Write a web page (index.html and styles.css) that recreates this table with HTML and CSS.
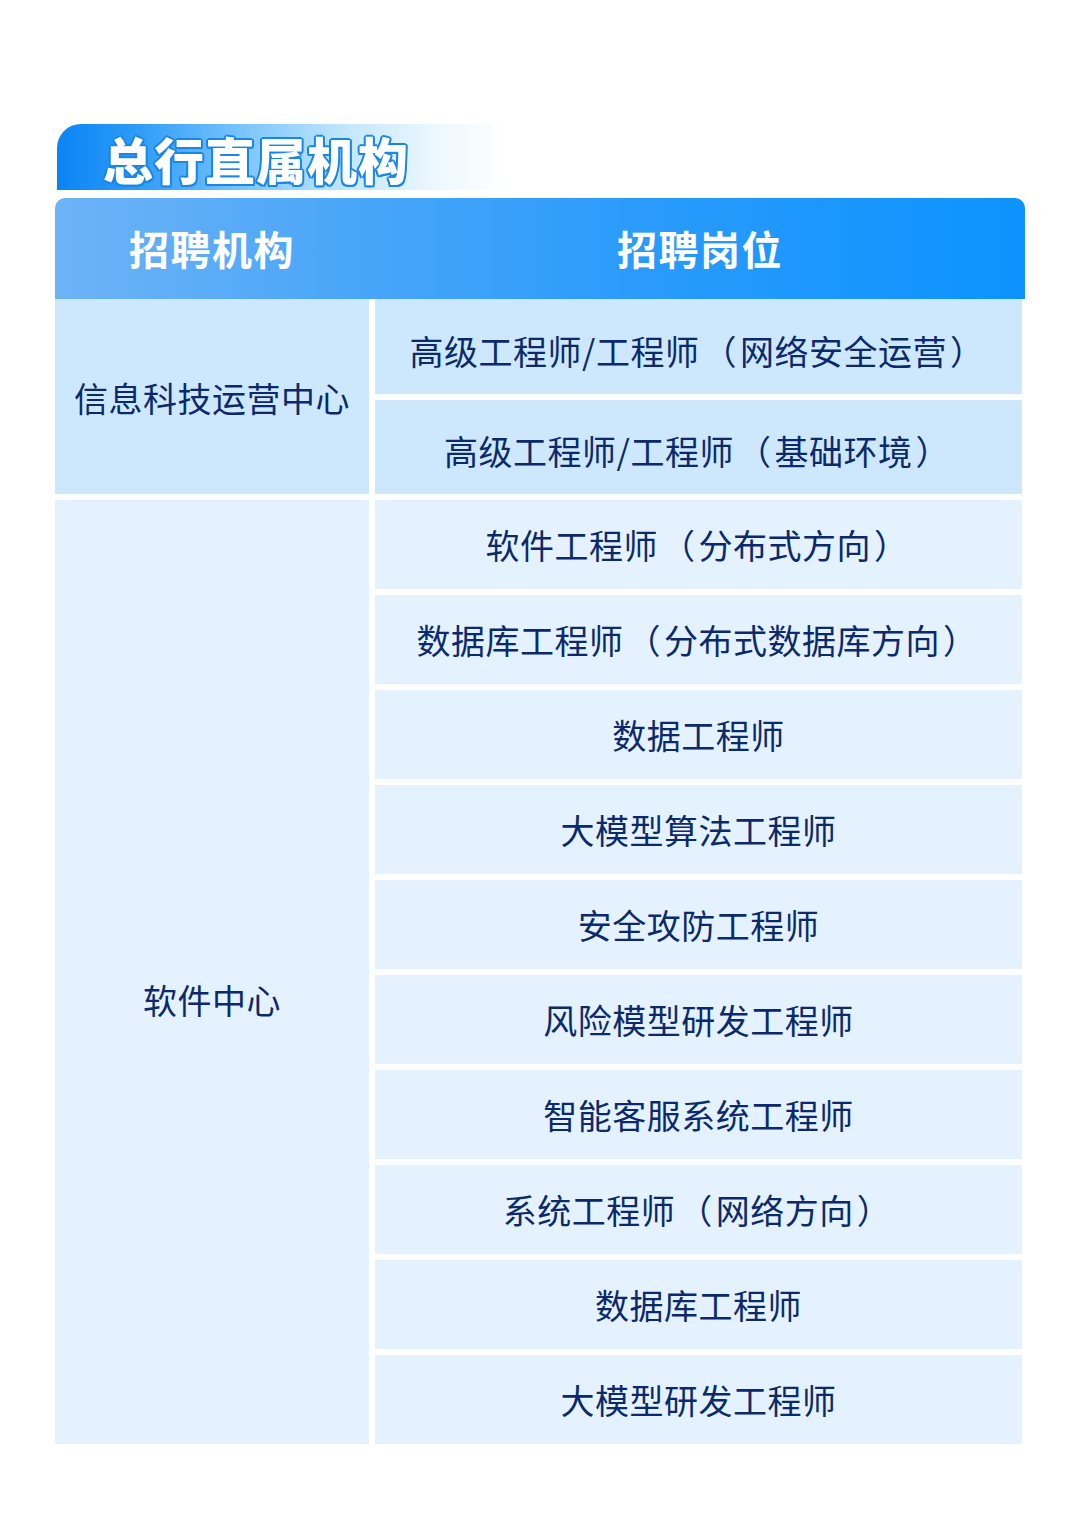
FILE: index.html
```html
<!DOCTYPE html>
<html lang="zh">
<head>
<meta charset="utf-8">
<link rel="stylesheet" href="styles.css">
</head>
<body>
<div class="page">
  <div class="title-bar"><span class="title">总行直属机构</span></div>
  <div class="table">
    <div class="head">
      <div class="hcell">招聘机构</div>
      <div class="hcell">招聘岗位</div>
    </div>
    <div class="group g1">
      <div class="org">信息科技运营中心</div>
      <div class="jobs">
        <div class="job tall">高级工程师/工程师<span class="p">（</span>网络安全运营<span class="p">）</span></div>
        <div class="job tall">高级工程师/工程师<span class="p">（</span>基础环境<span class="p">）</span></div>
      </div>
    </div>
    <div class="group g2">
      <div class="org org2">软件中心</div>
      <div class="jobs">
        <div class="job">软件工程师<span class="p">（</span>分布式方向<span class="p">）</span></div>
        <div class="job">数据库工程师<span class="p">（</span>分布式数据库方向<span class="p">）</span></div>
        <div class="job">数据工程师</div>
        <div class="job">大模型算法工程师</div>
        <div class="job">安全攻防工程师</div>
        <div class="job">风险模型研发工程师</div>
        <div class="job">智能客服系统工程师</div>
        <div class="job">系统工程师<span class="p">（</span>网络方向<span class="p">）</span></div>
        <div class="job">数据库工程师</div>
        <div class="job">大模型研发工程师</div>
      </div>
    </div>
  </div>
</div>
</body>
</html>
```
FILE: styles.css
```css
* { box-sizing: border-box; }
html, body { margin: 0; padding: 0; background: #ffffff; }
body {
  font-family: "Noto Sans CJK SC", "Noto Sans", sans-serif;
  width: 1080px;
  height: 1535px;
  overflow: hidden;
}
.page {
  padding: 124px 0 0 55px;
}
.title-bar {
  margin-left: 2px;
  width: 450px;
  height: 66px;
  border-top-left-radius: 24px;
  background: linear-gradient(90deg, #0a84f5 0%, #2e9cf8 18%, #7cc6fd 42%, #c4e8ff 65%, #eef8ff 85%, rgba(255,255,255,0) 100%);
  display: flex;
  align-items: center;
  padding-left: 46px;
}
.title {
  font-size: 50px;
  font-weight: 900;
  color: #ffffff;
  letter-spacing: 1px;
  line-height: 1;
  text-shadow:
    2px 0 0 #1a86ea, -2px 0 0 #1a86ea, 0 2px 0 #1a86ea, 0 -2px 0 #1a86ea,
    1.5px 1.5px 0 #1a86ea, -1.5px 1.5px 0 #1a86ea, 1.5px -1.5px 0 #1a86ea, -1.5px -1.5px 0 #1a86ea;
  margin-top: 2px;
}
.table {
  margin-top: 8px;
  width: 970px;
}
.head {
  display: grid;
  grid-template-columns: 314px 1fr;
  gap: 6px;
  height: 101px;
  border-radius: 10px 10px 0 0;
  background: linear-gradient(90deg, #6db3f6 0%, #4aa6f8 30%, #2a9bfb 60%, #0c93fe 100%);
}
.hcell {
  display: flex;
  align-items: center;
  justify-content: center;
  color: #ffffff;
  font-size: 40px;
  font-weight: 700;
  letter-spacing: 1.5px;
  padding-bottom: 2px;
}
.group {
  display: grid;
  grid-template-columns: 314px 647px;
  gap: 6px;
}
.g2 { margin-top: 6px; }
.org {
  display: flex;
  align-items: center;
  justify-content: center;
  font-size: 34px;
  color: #0c2a6b;
  letter-spacing: 0.5px;
}
.g1 .org { background: #cde8fd; padding-top: 2px; }
.g2 .org { background: #e3f2fe; padding-top: 54px; }
.jobs {
  display: flex;
  flex-direction: column;
  gap: 6px;
}
.job {
  height: 89px;
  display: flex;
  align-items: center;
  justify-content: center;
  font-size: 34px;
  color: #0c2a6b;
  letter-spacing: 0.5px;
  background: #e3f2fe;
}
.g1 .job { background: #cde8fd; padding-top: 8px; }
.job.tall { height: 94.5px; }
.p {
  margin: 0 3px;
}
```
